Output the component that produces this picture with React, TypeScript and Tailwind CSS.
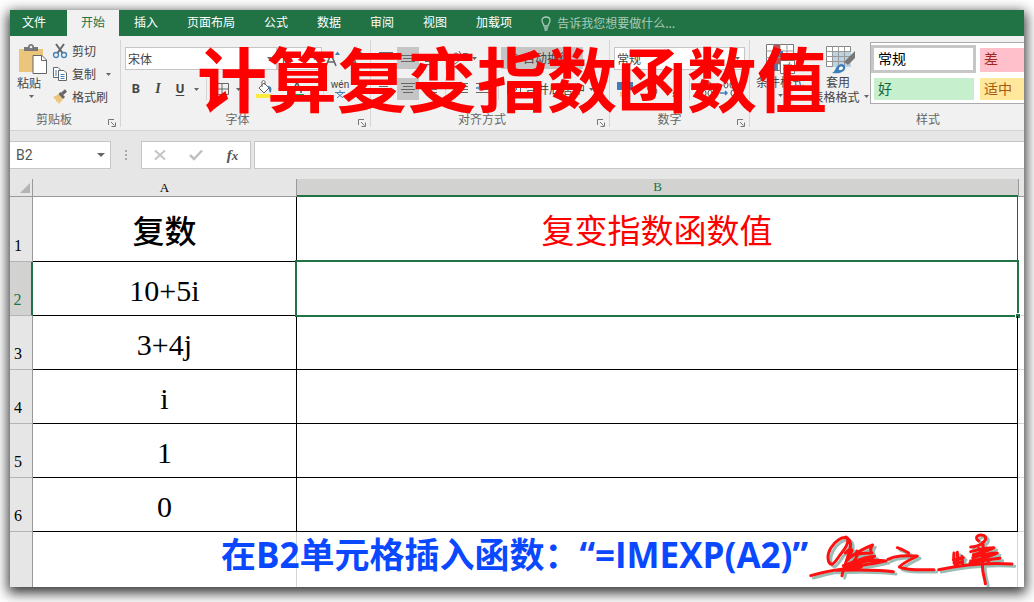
import React from 'react'
import clsx from 'clsx'

const tabs = ['文件', '开始', '插入', '页面布局', '公式', '数据', '审阅', '视图', '加载项']

const rows = [
    { id: 2, value: '10+5i' },
    { id: 3, value: '3+4j' },
    { id: 4, value: 'i' },
    { id: 5, value: '1' },
    { id: 6, value: '0' },
]

const Arrow = ({ className }: { className?: string }) => (
    <svg width="5" height="3" viewBox="0 0 5 3" className={clsx('shrink-0', className)}>
        <path d="M0 0H5L2.5 3Z" fill="#666" />
    </svg>
)

const Launcher = () => (
    <button aria-label="更多选项" className="absolute right-1 bottom-0">
        <svg width="8" height="8" viewBox="0 0 8 8" fill="none" stroke="#777">
            <path d="M.5 6V.5H6M3 3L6.5 6.5M7.5 3.5V7.5H3.5" />
        </svg>
    </button>
)

type GroupProps = {
    label: string
    className?: string
    labelClass?: string
    launcher?: boolean
    children: React.ReactNode
}

const Group = ({ label, className, labelClass, launcher = true, children }: GroupProps) => (
    <section aria-label={label} className={clsx('relative flex h-[87px] flex-col justify-between', className)}>
        {children}
        <div className={clsx('text-center leading-4 text-[#666]', labelClass)}>{label}</div>
        {launcher && <Launcher />}
    </section>
)

const Combo = ({ label, value, className }: { label: string; value: string; className?: string }) => (
    <div className={clsx('relative h-[23px] border border-[#c6c6c6] bg-white', className)}>
        <select aria-label={label} className="h-full w-full appearance-none bg-transparent pl-0.5 leading-5 text-[#444] outline-none">
            <option>{value}</option>
        </select>
        <Arrow className="absolute top-[9px] right-1" />
    </div>
)

type ToolProps = { label: string; active?: boolean; className?: string; children: React.ReactNode }

const Tool = ({ label, active, className, children }: ToolProps) => (
    <button aria-label={label} className={clsx('flex h-[22px] shrink-0 items-center justify-center', active && 'bg-[#c5c5c5]', className ?? 'w-[22px]')}>
        {children}
    </button>
)

const Lines = ({ d }: { d: string }) => (
    <svg width="14" height="14" viewBox="0 0 14 14" stroke="#666" fill="none">
        <path d={d} />
    </svg>
)

const Sep = () => <div className="mx-1 h-[22px] w-px shrink-0 bg-[#d5d5d5]" />

const Clipboard = () => (
    <Group label="剪贴板" className="w-[111px] shrink-0 border-r border-[#d5d5d5]" labelClass="pr-[22px]">
        <div className="flex">
            <button className="flex w-[42px] flex-col items-center pt-[3px]">
                <svg width="30" height="32" viewBox="0 0 30 32" className="ml-1">
                    <path d="M1 6H25V29H1Z" fill="#ecc57c" />
                    <path d="M6 8V4H10C10 0 16 0 16 4H20V8Z" fill="#777" />
                    <circle cx="13" cy="4" r="1.3" fill="#f1f1f1" />
                    <path d="M15 12.500H24L28.500 17V30.500H15Z" fill="#fff" stroke="#666" />
                    <path d="M23.500 12.500V17.500H28.500" fill="none" stroke="#666" />
                </svg>
                <span className="pr-1 leading-4">粘贴</span>
                <Arrow className="mt-1" />
            </button>
            <div className="flex flex-col gap-px">
                <button className="flex h-[22px] items-center gap-1">
                    <svg width="16" height="16" viewBox="0 0 16 16" fill="none">
                        <path d="M4 1L10.500 10M12 1L5.500 10" stroke="#666" strokeWidth="2" />
                        <circle cx="4" cy="12" r="2.500" stroke="#3f7fb8" strokeWidth="1.300" />
                        <circle cx="12" cy="12" r="2.500" stroke="#3f7fb8" strokeWidth="1.300" />
                    </svg>
                    剪切
                </button>
                <button className="flex h-[22px] items-center gap-1">
                    <svg width="16" height="16" viewBox="0 0 16 16" fill="#fff">
                        <path d="M1.500 1.500H6L8.500 4V11.500H1.500Z" stroke="#666" />
                        <path d="M6.500 4.500H12L14.500 7V14.500H6.500Z" stroke="#666" />
                        <path d="M3 5H5M3 7H5M3 9H5M8.500 8.500H12.500M8.500 10.500H12.500M8.500 12.500H12.500" stroke="#3f7fb8" />
                    </svg>
                    复制
                    <Arrow className="ml-[6px]" />
                </button>
                <button className="flex h-[22px] items-center gap-1">
                    <svg width="16" height="16" viewBox="0 0 16 16">
                        <path d="M1 8L7 5L11 10L7 15L5.500 12.500L4.500 13L4 11Z" fill="#ecc57c" />
                        <path d="M6.500 5L8.500 3L13 8L11 10Z" fill="#666" />
                        <path d="M10 5L14 1.500" stroke="#666" strokeWidth="3" />
                    </svg>
                    格式刷
                </button>
            </div>
        </div>
    </Group>
)

const FontGroup = () => (
    <Group label="字体" className="w-[250px] shrink-0 border-r border-[#d5d5d5] pl-1" labelClass="pr-5">
        <div className="flex flex-col gap-2 pt-[7px]">
            <div className="flex items-center">
                <Combo label="字体" value="宋体" className="w-[152px]" />
                <Combo label="字号" value="11" className="w-[45px]" />
                <Tool label="增大字号">
                    <svg width="18" height="18" viewBox="0 0 18 18" fill="none">
                        <path d="M2 16L7 4L12 16M4 12H10" stroke="#666" strokeWidth="1.600" />
                        <path d="M11 5L13.500 1.500L16 5Z" fill="#3f7fb8" />
                    </svg>
                </Tool>
                <Tool label="减小字号">
                    <svg width="18" height="18" viewBox="0 0 18 18" fill="none">
                        <path d="M3 16L7 6L11 16M5 12.500H9" stroke="#666" strokeWidth="1.500" />
                        <path d="M11 2L16 2L13.500 5Z" fill="#3f7fb8" />
                    </svg>
                </Tool>
            </div>
            <div className="flex items-center font-[Roboto] text-[13px]">
                <Tool label="加粗"><b>B</b></Tool>
                <Tool label="倾斜"><i className="font-['Liberation_Serif'] text-sm font-bold">I</i></Tool>
                <Tool label="下划线"><b className="underline underline-offset-2">U</b></Tool>
                <Arrow className="mx-[3px]" />
                <Sep />
                <Tool label="边框">
                    <Lines d="M.5 1.500H13.500V12.500H.5ZM7 1.500V12.500M.5 7H13.500" />
                </Tool>
                <Arrow className="mx-[3px]" />
                <Sep />
                <Tool label="填充颜色">
                    <svg width="17" height="18" viewBox="0 0 17 18">
                        <path d="M3 8L8 3L13 8L8 13ZM6 7V2C6 0 9 0 9 2V5" fill="#fff" stroke="#666" />
                        <path d="M12 6C15 6 16 8 15 12C14 13 13 12 13 9Z" fill="#3f7fb8" />
                        <path d="M0 14H15V18H0Z" fill="#ffeb3b" />
                    </svg>
                </Tool>
                <Arrow className="mx-[3px]" />
                <Tool label="字体颜色">
                    <svg width="16" height="18" viewBox="0 0 16 18">
                        <path d="M3.500 13L8 2L12.500 13M5 9H11" fill="none" stroke="#555" strokeWidth="1.600" />
                        <path d="M1 14H15V18H1Z" fill="#13a34e" />
                    </svg>
                </Tool>
                <Arrow className="mx-[3px]" />
                <Sep />
                <Tool label="拼音" className="w-6 flex-col">
                    <span className="text-[10px] leading-[10px]">wén</span>
                    <svg width="12" height="8" viewBox="0 0 12 8" stroke="#3f7fb8" fill="none">
                        <path d="M6 0V2M1 2.500H11M3 3L9 8M9 3L3 8" />
                    </svg>
                </Tool>
            </div>
        </div>
    </Group>
)

const AlignGroup = () => (
    <Group label="对齐方式" className="w-[239px] shrink-0 border-r border-[#d5d5d5] pl-1" labelClass="pr-5">
        <div className="flex flex-col gap-[9px] pt-[7px]">
            <div className="flex items-center">
                <Tool label="顶端对齐"><Lines d="M0 1.500H14M2 4.500H12M0 7.500H14" /></Tool>
                <Tool label="垂直居中" active><Lines d="M0 4.500H14M2 7.500H12M0 10.500H14" /></Tool>
                <Tool label="底端对齐"><Lines d="M0 7.500H14M2 10.500H12M0 13.500H14" /></Tool>
                <Sep />
                <Tool label="方向">
                    <svg width="18" height="16" viewBox="0 0 18 16" fill="none" stroke="#666">
                        <path d="M3 14L15 4M11 3.500H15.500V8" />
                        <circle cx="4" cy="5" r="2" />
                        <path d="M7 1L10 6" />
                    </svg>
                </Tool>
                <Arrow />
                <div className="flex-1" />
                <Sep />
                <button className="mr-[26px] flex h-[22px] w-[82px] items-center gap-1 bg-[#c5c5c5] px-1">
                    <Lines d="M3.500 0V14M6 3.500H12V9.500H6M8 7.500L6 9.500L8 11.500" />
                    自动换行
                </button>
            </div>
            <div className="flex items-center">
                <Tool label="左对齐"><Lines d="M0 1.500H14M0 4.500H9M0 7.500H14M0 10.500H9" /></Tool>
                <Tool label="居中" active><Lines d="M0 1.500H14M2 4.500H12M0 7.500H14M2 10.500H12" /></Tool>
                <Tool label="右对齐"><Lines d="M0 1.500H14M5 4.500H14M0 7.500H14M5 10.500H14" /></Tool>
                <Sep />
                <Tool label="减少缩进量"><Lines d="M0 1.500H14M6 4.500H14M6 7.500H14M0 10.500H14M4 6H0" /></Tool>
                <Tool label="增加缩进量">
                    <svg width="14" height="14" viewBox="0 0 14 14" fill="none">
                        <path d="M0 1.500H14M7 4.500H14M7 7.500H14M0 10.500H14" stroke="#666" />
                        <path d="M0 6H5M3 4L5 6L3 8" stroke="#3f7fb8" strokeWidth="1.500" />
                    </svg>
                </Tool>
                <div className="flex-1" />
                <Sep />
                <button className="mr-[10px] flex h-[22px] w-[98px] items-center gap-1 px-1">
                    <svg width="14" height="14" viewBox="0 0 14 14" fill="none">
                        <path d="M.5 1.500H13.500V12.500H.5Z" stroke="#666" />
                        <path d="M2 7H10M8 5L10 7L8 9" stroke="#3f7fb8" />
                    </svg>
                    合并后居中
                    <Arrow />
                </button>
            </div>
        </div>
    </Group>
)

const NumberGroup = () => (
    <Group label="数字" className="w-[140px] shrink-0 border-r border-[#d5d5d5] px-1" labelClass="pr-5">
        <div className="flex flex-col gap-2 pt-[7px]">
            <Combo label="数字格式" value="常规" />
            <div className="flex items-center">
                <Tool label="会计数字格式">
                    <svg width="18" height="16" viewBox="0 0 18 16">
                        <path d="M1 1H17V9H1Z" fill="#3f7fb8" />
                        <circle cx="9" cy="5" r="3" fill="#fff" />
                        <path d="M4 12H10M4 14.500H10" stroke="#ecc57c" strokeWidth="2" />
                    </svg>
                </Tool>
                <Arrow />
                <Tool label="百分比">%</Tool>
                <Tool label="千位分隔"><b>,</b></Tool>
                <Sep />
                <Tool label="增加小数位数">
                    <svg width="18" height="16" viewBox="0 0 18 16" fill="none" stroke="#555">
                        <ellipse cx="13" cy="4" rx="2" ry="3" />
                        <ellipse cx="8" cy="12" rx="2" ry="3" />
                        <ellipse cx="14" cy="12" rx="2" ry="3" />
                        <path d="M2 4H8M4 2L2 4L4 6" stroke="#3f7fb8" />
                    </svg>
                </Tool>
                <Tool label="减少小数位数">
                    <svg width="18" height="16" viewBox="0 0 18 16" fill="none" stroke="#555">
                        <ellipse cx="8" cy="4" rx="2" ry="3" />
                        <ellipse cx="14" cy="4" rx="2" ry="3" />
                        <ellipse cx="15" cy="12" rx="2" ry="3" />
                        <path d="M2 12H9M7 10L9 12L7 14" stroke="#3f7fb8" strokeWidth="1.500" />
                    </svg>
                </Tool>
            </div>
        </div>
    </Group>
)

const StylesGroup = () => (
    <Group label="样式" className="min-w-0 flex-1" labelClass="pl-[82px]" launcher={false}>
        <div className="flex">
            <button className="flex w-[60px] shrink-0 flex-col items-center pt-1">
                <svg width="30" height="30" viewBox="0 0 30 30">
                    <path d="M1.500 .5H28.500V26.500H1.500Z" fill="#fff" stroke="#777" />
                    <path d="M1 7H29M1 13.500H29M1 20H29M8.500 0V27M15 0V27M22 0V27" stroke="#999" fill="none" />
                    <path d="M9 1H15V7H9ZM9 14H20V20H9Z" fill="#c0504d" />
                    <path d="M9 7H18V13H9ZM9 20H13V26H9Z" fill="#3f7fb8" />
                    <path d="M15.500 16.500H29.500V29.500H15.500Z" fill="#fff" stroke="#777" />
                    <path d="M18 21H27M18 25H27M25 18L20 28" stroke="#666" />
                </svg>
                <span className="leading-4">条件格式</span>
                <Arrow className="mt-1" />
            </button>
            <button className="flex w-[60px] shrink-0 flex-col items-center pt-[5px]">
                <svg width="30" height="29" viewBox="0 0 30 29">
                    <path d="M1.500 1.500H25.500V21.500H1.500Z" fill="#fff" stroke="#888" />
                    <path d="M8 6H26V22H8Z" fill="#bcd3e2" />
                    <path d="M1 6.500H26M1 11.500H26M1 16.500H26M7.500 1V22M13.500 1V22M19.500 1V22" stroke="#999" fill="none" />
                    <path d="M30 6V13L23 20L19 17Z" fill="#777" />
                    <path d="M7 28C11 27 10 20 16 19C21 19 22 25 17 27C14 29 10 28 7 28Z" fill="#3f7fb8" />
                    <path d="M14 23C15 21 18 21 18 23C18 25 15 25 14 25Z" fill="#fff" />
                </svg>
                <span className="pr-1 leading-[15px]">套用</span>
                <span className="flex items-center gap-1 leading-[15px] whitespace-nowrap">表格格式 <Arrow /></span>
            </button>
            <div className="mt-0.5 grid h-[62px] min-w-0 flex-1 grid-cols-[105px_1fr] content-start gap-x-1 gap-y-[3px] border border-r-0 border-[#ababab] bg-white pt-0.5 text-sm text-black">
                <button className="h-7 border-[3px] border-[#c6c6c6] pb-1 pl-1 text-left leading-5">常规</button>
                <button className="my-[3px] bg-[#ffc0cb] pb-1 pl-1 text-left leading-5 text-[#a5261b]">差</button>
                <button className="mr-0.5 ml-[3px] h-[22px] bg-[#c6efce] pb-1 pl-1 text-left leading-5 text-[#14663a]">好</button>
                <button className="h-[22px] bg-[#ffe79b] pb-1 pl-1 text-left leading-5 text-[#a85a10]">适中</button>
            </div>
        </div>
    </Group>
)

const FormulaBar = () => (
    <div className="flex items-center border-t border-[#d2d2d2] pt-[10px] pb-[10px]">
        <div className="relative h-7 w-[101px] shrink-0 border border-l-0 border-[#c6c6c6] bg-white">
            <input aria-label="名称框" defaultValue="B2" className="h-full w-full bg-transparent pl-[6px] font-[Roboto] text-sm text-[#555] outline-none" />
            <button aria-label="名称列表" className="absolute top-[11px] right-[5px]">
                <svg width="8" height="4" viewBox="0 0 8 4"><path d="M0 0H8L4 4Z" fill="#666" /></svg>
            </button>
        </div>
        <svg width="30" height="12" viewBox="0 0 30 12" className="shrink-0">
            <path d="M14 1H16V3H14ZM14 5H16V7H14ZM14 9H16V11H14Z" fill="#aaa" />
        </svg>
        <div className="flex h-7 w-[110px] shrink-0 items-center justify-around border border-[#c6c6c6] bg-white">
            <button aria-label="取消">
                <svg width="12" height="12" viewBox="0 0 12 12" stroke="#c4c4c4" strokeWidth="2"><path d="M1 1.500L11 10.500M11 1.500L1 10.500" /></svg>
            </button>
            <button aria-label="输入">
                <svg width="14" height="12" viewBox="0 0 14 12" stroke="#c0c0c0" strokeWidth="2.500" fill="none"><path d="M1 6L5 10L13 1.500" /></svg>
            </button>
            <button aria-label="插入函数" className="font-['Liberation_Serif'] text-[15px] leading-4 font-bold text-[#555] italic">
                f<span className="text-[13px]">x</span>
            </button>
        </div>
        <input aria-label="编辑栏" className="ml-[3px] h-7 min-w-0 flex-1 border border-r-0 border-[#c6c6c6] bg-white px-2 outline-none" />
    </div>
)

const Sheet = () => (
    <table className="w-full table-fixed border-separate border-spacing-0 bg-white text-black">
        <colgroup>
            <col className="w-[23px]" />
            <col className="w-[264px]" />
            <col />
            <col className="w-[6px]" />
        </colgroup>
        <thead className="font-['Liberation_Serif'] text-[13px] leading-4">
            <tr className="h-[18px] bg-[#e6e6e6]">
                <th className="border-r border-b border-[#999] p-0">
                    <svg width="10" height="10" viewBox="0 0 10 10" className="ml-[10px]"><path d="M10 0V10H0Z" fill="#b4b4b4" /></svg>
                </th>
                <th className="border-r border-b border-[#999] p-0 pt-px font-normal">A</th>
                <th className="border-b-2 border-[#217346] bg-[#d2d2d0] p-0 font-normal text-[#217346]">B</th>
                <th className="border-b border-l border-[#999] p-0" />
            </tr>
        </thead>
        <tbody className="font-['Liberation_Serif','Noto_Sans_CJK_SC',serif] text-[30px]">
            <tr className="h-[65px]">
                <RowHead id={1} />
                <td className="border-r border-b p-0 pt-[6px] text-center text-[32px] leading-10 font-medium">复数</td>
                <td className="border-r border-b p-0 pt-[6px] text-center text-[33px] leading-10 text-[#f00]">复变指数函数值</td>
                <td />
            </tr>
            {rows.map((row) => (
                <tr key={row.id} className="h-[54px]">
                    <RowHead id={row.id} selected={row.id === 2} />
                    <td className="border-r border-b p-0 pt-1 text-center leading-8">{row.value}</td>
                    <td className="relative border-r border-b p-0">
                        {row.id === 2 && (
                            <>
                                <span className="absolute -inset-0.5 border-2 border-[#217346]" />
                                <span className="absolute -right-1 -bottom-1 h-[6px] w-[6px] border border-white bg-[#217346]" />
                            </>
                        )}
                    </td>
                    <td className="border-b border-[#d4d4d4] p-0" />
                </tr>
            ))}
            <tr className="h-[55px]">
                <td className="border-r border-[#999] bg-[#e6e6e6]" />
                <td className="border-r border-[#d4d4d4]" />
                <td className="border-r border-[#d4d4d4]" />
                <td />
            </tr>
        </tbody>
    </table>
)

const RowHead = ({ id, selected }: { id: number; selected?: boolean }) => (
    <th
        className={clsx(
            'border-b border-b-[#b4b4b4] p-0 pr-[6px] pb-[6px] align-bottom text-base leading-[18px] font-normal',
            selected ? 'border-r-2 border-r-[#217346] bg-[#d2d2d0] text-[#217346]' : 'border-r border-r-[#999] bg-[#e6e6e6]'
        )}
    >
        {id}
    </th>
)

const strokes = [
    'M92 132C78 130 76 104 88 84C102 60 122 50 134 52C146 58 138 78 116 104C108 116 98 130 92 132',
    'M134 50C150 60 150 80 142 100C136 124 126 144 122 166',
    'M132 98C140 88 150 84 152 90C148 102 144 112 140 118',
    'M146 112C164 98 188 84 214 74C206 84 206 92 212 98C192 98 172 98 164 104',
    'M166 92C170 100 166 112 158 122',
    'M126 136C160 124 194 108 220 108C196 122 166 132 136 140',
    'M142 134C180 122 220 116 254 122M140 144C180 134 220 130 250 122',
    'M28 166C80 150 130 144 180 140M96 150C160 148 226 146 276 154',
    'M260 117C285 104 315 106 348 107C326 118 304 128 294 140C316 150 350 148 398 148',
    'M288 82C302 86 312 92 322 98',
    'M458 98C456 114 458 128 462 134M468 96L470 132M482 108L484 132M456 118L486 112M458 128L484 124',
    'M412 148C470 136 550 126 632 131',
    'M532 62C518 52 530 42 542 44C556 46 556 58 546 66C534 76 518 80 508 80',
    'M508 94C530 88 556 82 578 82C560 92 536 98 516 104',
    'M514 112C540 104 566 98 588 98C564 110 540 116 508 122',
    'M506 128C540 122 570 116 596 114M532 84L562 124',
    'M544 66C550 90 538 134 546 160C548 172 552 184 552 190',
]

const Signature = () => (
    <svg viewBox="20 35 624 165" className="h-[55px] w-[208px]" fill="none" strokeLinecap="round" strokeLinejoin="round" role="img" aria-label="签名">
        <g stroke="#6fa398" strokeWidth="9" opacity="0.7" transform="translate(8 7)">
            {strokes.map((d) => <path key={d} d={d} />)}
        </g>
        <g stroke="#f11" strokeWidth="9">
            {strokes.map((d) => <path key={d} d={d} />)}
        </g>
    </svg>
)

const App = () => (
    <div className="min-h-screen bg-white px-[10px] pt-[10px] pb-[15px] font-['Noto_Sans_CJK_SC',sans-serif] text-xs text-[#444]">
        <main className="relative bg-[#e6e6e6] shadow-[0_4px_12px_2px_rgba(0,0,0,0.8)]">
            <div className="overflow-hidden">
                <nav className="flex h-[26px] items-stretch gap-px bg-[#217346] text-white">
                    {tabs.map((tab) => (
                        <button
                            key={tab}
                            className={clsx('shrink-0 pb-0.5', tab === '文件' ? 'w-14 pr-2' : 'px-[14px]', tab === '开始' && 'bg-[#f1f1f1] text-[#217346]')}
                        >
                            {tab}
                        </button>
                    ))}
                    <button className="ml-[14px] flex shrink-0 items-center gap-[6px] text-[#a9cbb8]">
                        <svg width="10" height="15" viewBox="0 0 10 15" fill="none" stroke="currentColor" strokeWidth="1.300">
                            <path d="M3 10C3 8 1 7 1 4.500C1 2 3 1 5 1S9 2 9 4.500C9 7 7 8 7 10ZM3 12H7M3.500 14H6.500" />
                        </svg>
                        告诉我您想要做什么...
                    </button>
                </nav>
                <div className="flex bg-[#f1f1f1] pt-1 pb-[3px]">
                    <Clipboard />
                    <FontGroup />
                    <AlignGroup />
                    <NumberGroup />
                    <StylesGroup />
                </div>
                <FormulaBar />
                <Sheet />
            </div>

            <h1 className="pointer-events-none absolute top-[31px] left-[187px] text-[70px] leading-[72px] font-bold whitespace-nowrap text-[#f00]">
                计算复变指数函数值
            </h1>
            <div className="pointer-events-none absolute right-2 bottom-0 flex items-start">
                <p className="font-['Open_Sans','Noto_Sans_CJK_SC',sans-serif] text-[35px] leading-[46px] font-bold whitespace-nowrap text-[#0a48ff]">
                    在B2单元格插入函数：“=IMEXP(A2)”
                </p>
                <Signature />
            </div>
        </main>
    </div>
)

export default App
